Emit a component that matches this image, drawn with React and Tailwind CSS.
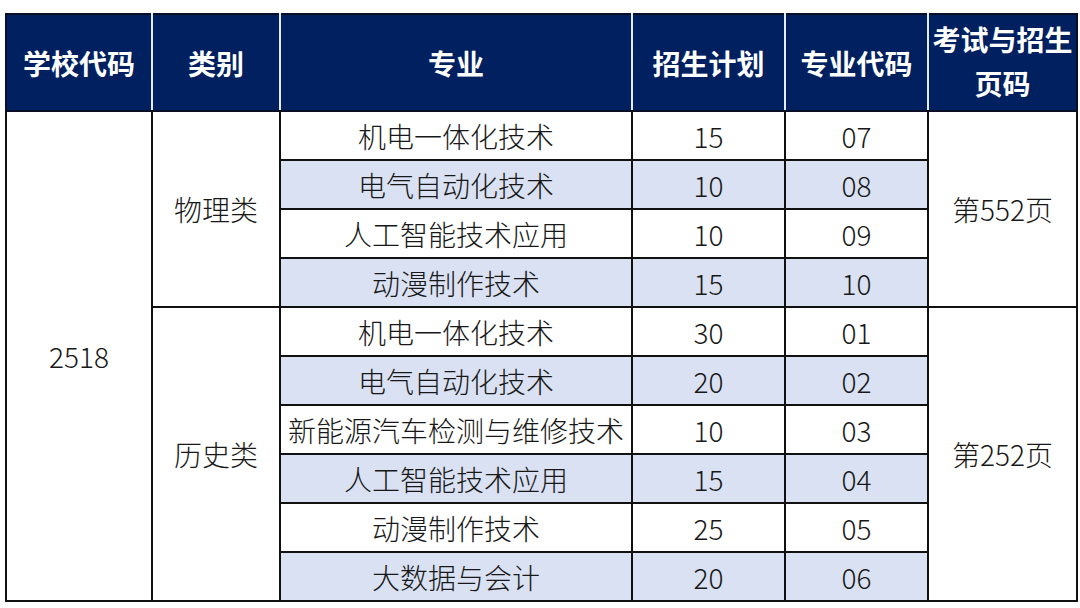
import React from "react";

const blue = "bg-[#d9e1f2]";

const rows = [
  { name: "机电一体化技术", plan: "15", code: "07" },
  { name: "电气自动化技术", plan: "10", code: "08" },
  { name: "人工智能技术应用", plan: "10", code: "09" },
  { name: "动漫制作技术", plan: "15", code: "10" },
  { name: "机电一体化技术", plan: "30", code: "01" },
  { name: "电气自动化技术", plan: "20", code: "02" },
  { name: "新能源汽车检测与维修技术", plan: "10", code: "03" },
  { name: "人工智能技术应用", plan: "15", code: "04" },
  { name: "动漫制作技术", plan: "25", code: "05" },
  { name: "大数据与会计", plan: "20", code: "06" },
];

export default function App() {
  const font = { fontFamily: '"Noto Sans CJK SC", "Noto Sans", sans-serif' };
  return (
    <div className="w-[1080px] h-[608px] bg-white pt-[13px] pl-[5px]" style={font}>
      <table className="table-fixed border-collapse w-[1071px] text-[28px] text-[#181818] font-light leading-none">
        <colgroup>
          <col className="w-[146px]" />
          <col className="w-[128px]" />
          <col className="w-[352px]" />
          <col className="w-[153px]" />
          <col className="w-[143px]" />
          <col className="w-[149px]" />
        </colgroup>
        <thead>
          <tr className="h-[97px] bg-[#002060] text-white">
            <th className="border-2 border-[#0b0f26] border-r-[#e6ecf5] font-bold">学校代码</th>
            <th className="border-2 border-[#0b0f26] border-x-[#e6ecf5] font-bold">类别</th>
            <th className="border-2 border-[#0b0f26] border-x-[#e6ecf5] font-bold">专业</th>
            <th className="border-2 border-[#0b0f26] border-x-[#e6ecf5] font-bold">招生计划</th>
            <th className="border-2 border-[#0b0f26] border-x-[#e6ecf5] font-bold">专业代码</th>
            <th className="border-2 border-[#0b0f26] border-l-[#e6ecf5] font-bold leading-[44px] pb-[4px]">
              考试与招生
              <br />
              页码
            </th>
          </tr>
        </thead>
        <tbody>
          {rows.map((r, i) => {
            const bg = i % 2 === 1 ? blue : "bg-white";
            return (
              <tr key={i} className="h-[49px]">
                {i === 0 && (
                  <td rowSpan={10} className="border-2 border-[#111] text-center align-middle">
                    2518
                  </td>
                )}
                {i === 0 && (
                  <td rowSpan={4} className="border-2 border-[#111] text-center align-middle">
                    物理类
                  </td>
                )}
                {i === 4 && (
                  <td rowSpan={6} className="border-2 border-[#111] text-center align-middle">
                    历史类
                  </td>
                )}
                <td className={`border-2 border-[#111] text-center whitespace-nowrap ${bg}`}>{r.name}</td>
                <td className={`border-2 border-[#111] text-center ${bg}`}>{r.plan}</td>
                <td className={`border-2 border-[#111] text-center ${bg}`}>{r.code}</td>
                {i === 0 && (
                  <td rowSpan={4} className="border-2 border-[#111] text-center align-middle">
                    第552页
                  </td>
                )}
                {i === 4 && (
                  <td rowSpan={6} className="border-2 border-[#111] text-center align-middle">
                    第252页
                  </td>
                )}
              </tr>
            );
          })}
        </tbody>
      </table>
    </div>
  );
}
